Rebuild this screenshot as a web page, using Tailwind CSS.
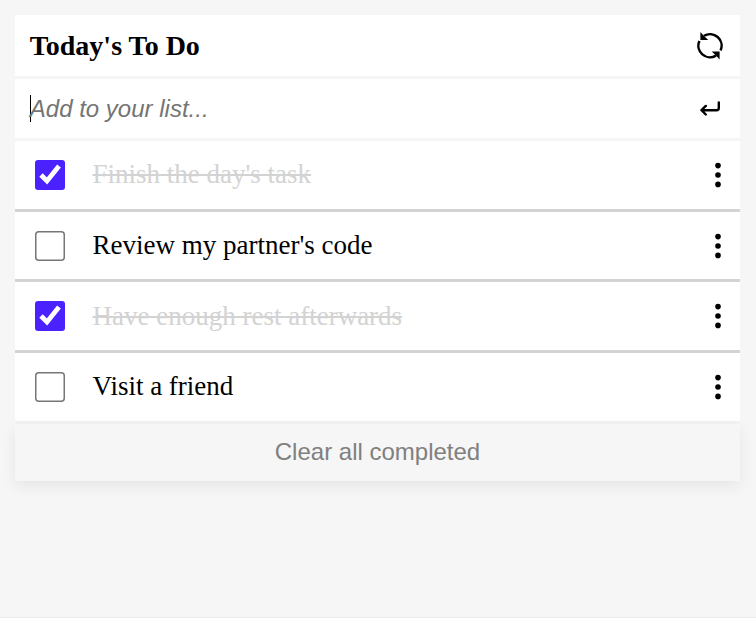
<!DOCTYPE html>
<html lang="en">
<head>
<meta charset="utf-8">
<title>Today's To Do</title>
<script src="https://cdn.jsdelivr.net/npm/@tailwindcss/browser@4"></script>
</head>
<body class="h-[618px] overflow-hidden border-b border-[#ebebeb] bg-[#f6f6f6] p-[15px] font-['Liberation_Serif',serif] text-black">
<main class="flex w-[725px] flex-col">
  <header class="flex h-16 items-center justify-between border-b-3 border-[#f5f5f5] bg-white pr-[17px] pl-[14.7px]">
    <h1 class="text-[28px] leading-8 font-bold">Today's To Do</h1>
    <svg class="mt-px h-[28px] w-[26px]" viewBox="0 0 26 28" fill="none" stroke="#000" stroke-width="2.5"><path d="M2.4 9A11.6 11.6 0 0 0 19 23.6M7 3.8A11.6 11.6 0 0 1 23.6 18.4"/><path d="M3.4 0v8h7.8L8.4 5.2 6.1 3zM22.6 27.4v-8h-7.8l2.8 2.8 2.3 2.2z" fill="#000" stroke="none"/></svg>
  </header>
  <div class="flex h-[62px] items-center justify-between border-b-3 border-[#f5f5f5] bg-white pr-[19px] pl-[15px]">
    <div class="flex items-center"><span class="h-[27px] w-px bg-black"></span><span class="-ml-[1.2px] font-['Liberation_Sans',sans-serif] text-[24px] leading-7 text-[#757575] italic">Add to your list...</span></div>
    <svg class="h-[16px] w-[21px]" viewBox="0 0 21 16" fill="none" stroke="#000" stroke-width="2.4" stroke-linecap="round" stroke-linejoin="round"><path d="M18.8 1.5v5.5q0 2.2-2.2 2.2H2M5.8 4.9 1.5 9.2l4.3 4.3"/></svg>
  </div>
  <ul>
    <li class="flex h-[71px] items-center border-b-3 border-[#d3d3d3] bg-white pr-[19px] pl-5">
      <input type="checkbox" checked class="m-[5px] size-5 scale-150 accent-[#4b22ff]">
      <span class="ml-[27.5px] flex-1 pb-0.5 text-[27px] leading-8 text-[#d3d3d3] line-through">Finish the day's task</span>
      <svg class="h-[26px] w-[6px]" viewBox="0 0 6 26"><circle cx="3" cy="3.6" r="2.8"/><circle cx="3" cy="13" r="2.8"/><circle cx="3" cy="22.4" r="2.8"/></svg>
    </li>
    <li class="flex h-[70px] items-center border-b-3 border-[#d3d3d3] bg-white pr-[19px] pl-5">
      <input type="checkbox" class="m-[5px] size-5 scale-150 accent-[#4b22ff]">
      <span class="ml-[27.5px] flex-1 pb-0.5 text-[27px] leading-8">Review my partner's code</span>
      <svg class="h-[26px] w-[6px]" viewBox="0 0 6 26"><circle cx="3" cy="3.6" r="2.8"/><circle cx="3" cy="13" r="2.8"/><circle cx="3" cy="22.4" r="2.8"/></svg>
    </li>
    <li class="flex h-[71px] items-center border-b-3 border-[#d3d3d3] bg-white pr-[19px] pl-5">
      <input type="checkbox" checked class="m-[5px] size-5 scale-150 accent-[#4b22ff]">
      <span class="ml-[27.5px] flex-1 text-[27px] leading-8 text-[#d3d3d3] line-through">Have enough rest afterwards</span>
      <svg class="h-[26px] w-[6px]" viewBox="0 0 6 26"><circle cx="3" cy="3.6" r="2.8"/><circle cx="3" cy="13" r="2.8"/><circle cx="3" cy="22.4" r="2.8"/></svg>
    </li>
    <li class="flex h-[71px] items-center border-b-3 border-[#f3f3f3] bg-white pr-[19px] pl-5">
      <input type="checkbox" class="m-[5px] size-5 scale-150 accent-[#4b22ff]">
      <span class="ml-[27.5px] flex-1 pb-0.5 text-[27px] leading-8">Visit a friend</span>
      <svg class="h-[26px] w-[6px]" viewBox="0 0 6 26"><circle cx="3" cy="3.6" r="2.8"/><circle cx="3" cy="13" r="2.8"/><circle cx="3" cy="22.4" r="2.8"/></svg>
    </li>
  </ul>
  <button class="h-[57px] bg-[#f6f6f6] pb-0.5 font-['Liberation_Sans',sans-serif] text-[24px] leading-7 text-[#808080] shadow-[0_5px_15px_rgba(0,0,0,0.07)]">Clear all completed</button>
</main>
</body>
</html>
